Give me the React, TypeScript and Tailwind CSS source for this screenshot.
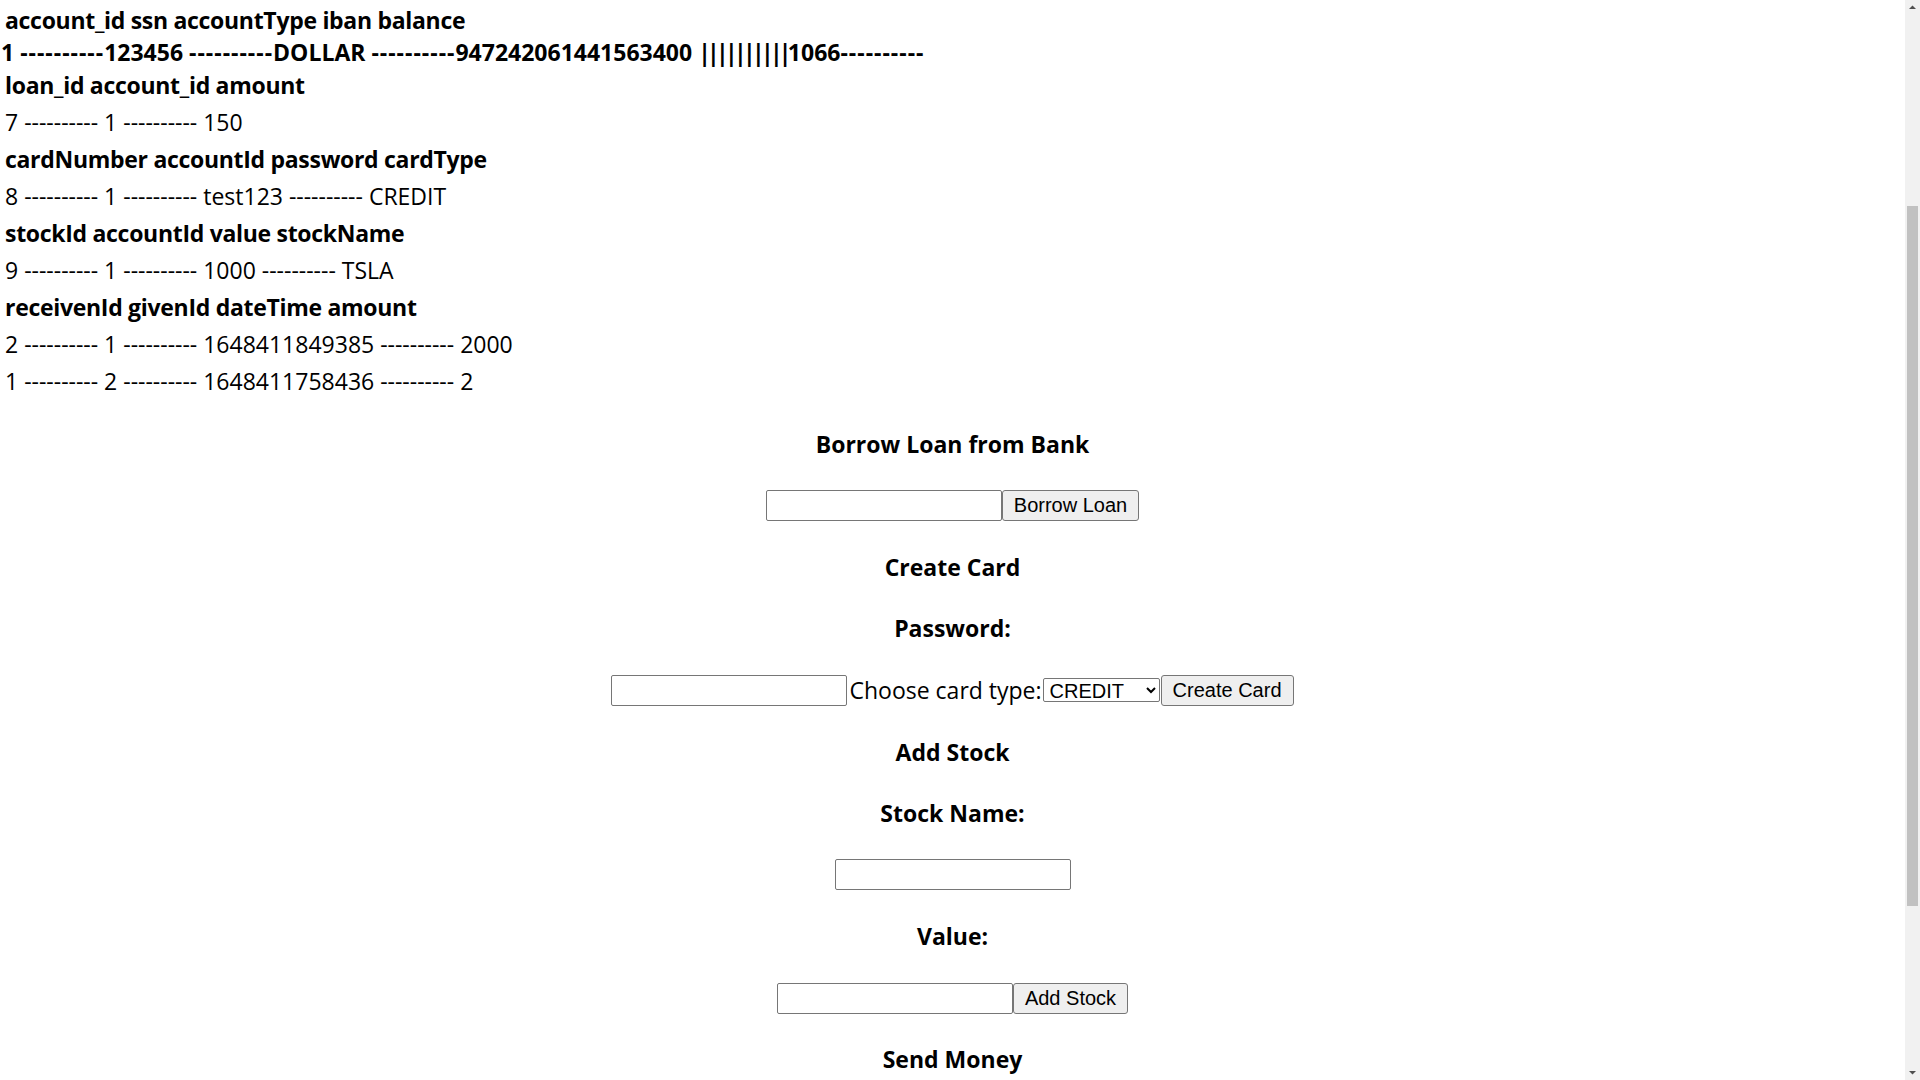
import React, { useState } from 'react'

const rows = [
  { text: 'account_id ssn accountType iban balance', bold: true, h: 'h-[35px]', pad: 'pl-[5px]' },
  { text: '', bold: true, h: 'h-[29px]', pad: 'pl-[1px]' },
  { text: 'loan_id account_id amount', bold: true, h: 'h-[37px]', pad: 'pl-[5px]' },
  { text: '7 ---------- 1 ---------- 150', bold: false, h: 'h-[37px]', pad: 'pl-[5px]' },
  { text: 'cardNumber accountId password cardType', bold: true, h: 'h-[37px]', pad: 'pl-[5px]' },
  { text: '8 ---------- 1 ---------- test123 ---------- CREDIT', bold: false, h: 'h-[37px]', pad: 'pl-[5px]' },
  { text: 'stockId accountId value stockName', bold: true, h: 'h-[37px]', pad: 'pl-[5px]' },
  { text: '9 ---------- 1 ---------- 1000 ---------- TSLA', bold: false, h: 'h-[37px]', pad: 'pl-[5px]' },
  { text: 'receivenId givenId dateTime amount', bold: true, h: 'h-[37px]', pad: 'pl-[5px]' },
  { text: '2 ---------- 1 ---------- 1648411849385 ---------- 2000', bold: false, h: 'h-[37px]', pad: 'pl-[5px]' },
  { text: '1 ---------- 2 ---------- 1648411758436 ---------- 2', bold: false, h: 'h-[37px]', pad: 'pl-[5px]' },
]

const inputCls = 'w-[236px] h-[31px] border border-[#767676] rounded-[2px] bg-white px-[2px] text-[20px] font-["Liberation_Sans",Arial,sans-serif]'
const btnCls = 'h-[31px] px-[11px] border border-[#767676] rounded-[3px] bg-[#efefef] text-[20px] text-black font-["Liberation_Sans",Arial,sans-serif] leading-none'

const Heading = ({ children }: { children: React.ReactNode }) => (
  <div className="h-[61.6px] flex items-center justify-center font-bold">{children}</div>
)

const Row = ({ children }: { children: React.ReactNode }) => (
  <div className="h-[61.6px] flex items-center justify-center">{children}</div>
)

const Dashes = () => <span className="tracking-[1px]">----------</span>

// looks like the page was scrolled a bit, so the thumb sits lower in the track
const Scrollbar = () => (
  <div className="w-[15px] shrink-0 h-full bg-[#f1f1f1] flex flex-col items-center">
    <svg width="15" height="15" viewBox="0 0 15 15" className="shrink-0">
      <polygon points="4,9 7.5,5.5 11,9" fill="#505050" />
    </svg>
    <div className="h-[191px] shrink-0" />
    <div className="w-[11px] h-[700px] shrink-0 bg-[#c1c1c1]" />
    <div className="flex-1" />
    <svg width="15" height="15" viewBox="0 0 15 15" className="shrink-0">
      <polygon points="4,6 7.5,9.5 11,6" fill="#505050" />
    </svg>
  </div>
)

export default function App() {
  const [cardType, setCardType] = useState('CREDIT')

  return (
    <div className="h-screen overflow-hidden flex bg-white text-black font-['Open_Sans','Noto_Sans',sans-serif] text-[23px]">
      <div className="flex-1 min-w-0 overflow-hidden">
        <div className="flex flex-col pt-[3px]">
          {rows.map((r, i) => (
            <div
              key={i}
              className={`${r.h} ${r.pad} flex items-center whitespace-pre ${r.bold ? 'font-bold' : 'font-normal'} ${r.bold && i !== 1 ? 'tracking-[-0.3px]' : ''}`}
            >
              {i === 1 ? (
                <span>
                  1 <Dashes />123456 <Dashes />DOLLAR <Dashes />947242061441563400{' '}
                  <span className="tracking-[-3.7px]">||||||||||</span>1066<Dashes />
                </span>
              ) : (
                r.text
              )}
            </div>
          ))}
        </div>

        <div className="flex flex-col mt-[13px]">
          <Heading>Borrow Loan from Bank</Heading>
          <Row>
            <input type="number" className={inputCls} />
            <button className={btnCls}>Borrow Loan</button>
          </Row>

          <Heading>Create Card</Heading>
          <Heading>Password:</Heading>
          <Row>
            <input type="password" className={inputCls} />
            <span className="ml-[2px] mr-[1px]">Choose card type:</span>
            <select
              value={cardType}
              onChange={(e) => setCardType(e.target.value)}
              className="w-[117px] h-[24px] border border-[#767676] rounded-[2px] bg-white text-[20px] pl-[2px] font-['Liberation_Sans',Arial,sans-serif] leading-none"
            >
              <option value="CREDIT">CREDIT</option>
              <option value="DEBIT">DEBIT</option>
            </select>
            <button className={`${btnCls} ml-[1px]`}>Create Card</button>
          </Row>

          <Heading>Add Stock</Heading>
          <Heading>Stock Name:</Heading>
          <Row>
            <input type="text" className={inputCls} />
          </Row>
          <Heading>Value:</Heading>
          <Row>
            <input type="number" className={inputCls} />
            <button className={btnCls}>Add Stock</button>
          </Row>

          <Heading>Send Money</Heading>
        </div>
      </div>
      <Scrollbar />
    </div>
  )
}
